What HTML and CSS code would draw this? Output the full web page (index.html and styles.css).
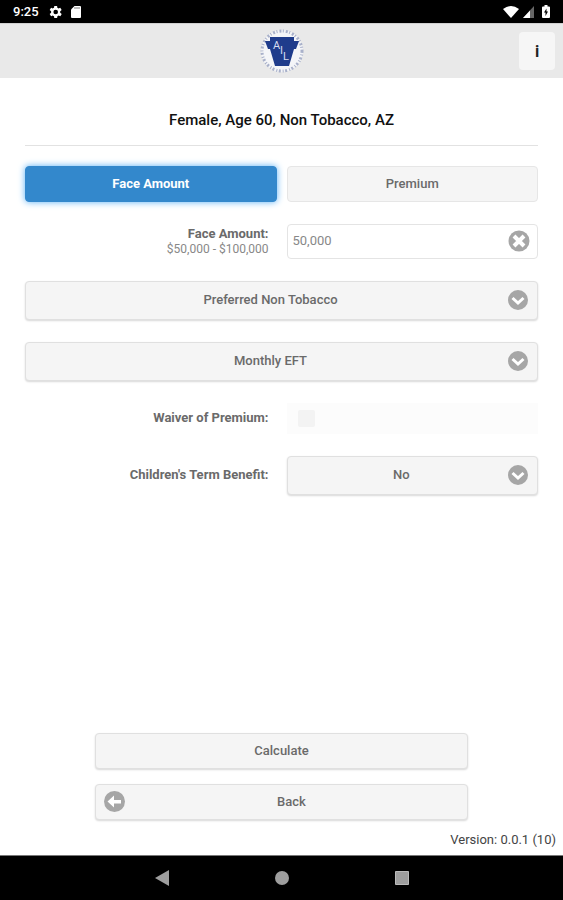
FILE: index.html
```html
<!DOCTYPE html>
<html lang="en">
<head>
  <meta charset="UTF-8" />
  <meta name="viewport" content="width=device-width, initial-scale=1" />
  <title>Quote</title>
  <link rel="stylesheet" href="styles.css">
</head>
<body>

<div class="status-bar">
  <span class="clock">9:25</span>
  <svg width="14" height="14" viewBox="2 2 20 20" fill="#fff"><path d="M19.4 13a7.500 7.500 0 0 0 0-2l2.100-1.700-2-3.400-2.500 1a7.300 7.300 0 0 0-1.700-1L15 3.300h-4l-.4 2.600a7.300 7.300 0 0 0-1.700 1l-2.500-1-2 3.400L6.500 11a7.500 7.500 0 0 0 0 2l-2.100 1.700 2 3.400 2.500-1a7.300 7.300 0 0 0 1.700 1l.4 2.600h4l.4-2.600a7.300 7.300 0 0 0 1.700-1l2.500 1 2-3.400zM13 15.300a3.300 3.300 0 1 1 0-6.600 3.300 3.300 0 0 1 0 6.600z"/></svg>
  <svg width="10" height="12" viewBox="0 0 10 12"><path fill="#fff" d="M3.500 0H9a1 1 0 0 1 1 1v10a1 1 0 0 1-1 1H1a1 1 0 0 1-1-1V3.500z"/><path stroke="#777" d="M4 1v2M6 1v2M8 1v2"/></svg>
  <div class="status-right">
    <svg width="16" height="12" viewBox="0 0 16 12"><path fill="#fff" d="M0 3Q8-3 16 3L8 12z"/></svg>
    <svg width="11" height="12" viewBox="0 0 11 12"><path fill="#666" d="M11 0v12H0z"/><path fill="#fff" d="M7 4.400V12H0z"/></svg>
    <svg width="8" height="13" viewBox="0 0 8 13"><path fill="#fff" d="M2.500 0h3v1.500H7a1 1 0 0 1 1 1V12a1 1 0 0 1-1 1H1a1 1 0 0 1-1-1V2.500a1 1 0 0 1 1-1h1.500z"/><path fill="#000" d="M4.500 3.500v3H6L3.500 11V7.500H2z"/></svg>
  </div>
</div>

<header class="header">
  <svg class="logo" width="46" height="46" viewBox="0 0 46 46">
    <circle cx="23" cy="23" r="21" fill="#f4f5f8"/>
    <circle cx="23" cy="23" r="20" fill="none" stroke="#a9b1ca" stroke-width="3" stroke-dasharray="2 1.500 1 2"/>
    <path fill="#1f3c8c" d="M11 9h24v4h5l-3 8h-2l-5 17H16l-5-17H9l-3-8h5z"/>
    <g class="logo-text">
      <text x="14" y="21">A</text>
      <text x="21" y="26">I</text>
      <text x="24" y="32">L</text>
    </g>
  </svg>
  <button type="button" class="info-btn">i</button>
</header>

<main class="content">
  <h1 class="summary">Female, Age 60, Non Tobacco, AZ</h1>

  <form class="quote-form">
    <div class="row">
      <button type="button" class="btn active" aria-pressed="true">Face Amount</button>
      <button type="button" class="btn" aria-pressed="false">Premium</button>
    </div>

    <div class="row">
      <label class="label" for="faceAmount">Face Amount:<small>$50,000 - $100,000</small></label>
      <div class="field">
        <input type="text" id="faceAmount" class="text-input" value="50,000" />
        <button type="button" class="clear-btn" aria-label="Clear">
          <svg width="22" height="22" viewBox="0 0 22 22"><circle cx="11" cy="11" r="10.500" fill="#a6a6a6"/><path stroke="#fff" stroke-width="4" d="M6 6l10 10M16 6L6 16"/></svg>
        </button>
      </div>
    </div>

    <div class="field">
      <select class="select" aria-label="Rate class">
        <option>Preferred Non Tobacco</option>
      </select>
      <svg class="arrow" width="20" height="20" viewBox="0 0 20 20"><circle cx="10" cy="10" r="10" fill="#a6a6a6"/><path fill="none" stroke="#fff" stroke-width="3" d="M4.500 8l5.500 5 5.500-5"/></svg>
    </div>

    <div class="field">
      <select class="select" aria-label="Payment mode">
        <option>Monthly EFT</option>
      </select>
      <svg class="arrow" width="20" height="20" viewBox="0 0 20 20"><circle cx="10" cy="10" r="10" fill="#a6a6a6"/><path fill="none" stroke="#fff" stroke-width="3" d="M4.500 8l5.500 5 5.500-5"/></svg>
    </div>

    <div class="row">
      <label class="label" for="waiver">Waiver of Premium:</label>
      <div class="check-box">
        <input type="checkbox" id="waiver" class="check" disabled />
      </div>
    </div>

    <div class="row">
      <label class="label" for="childTerm">Children's Term Benefit:</label>
      <div class="field">
        <select class="select" id="childTerm">
          <option>No</option>
        </select>
        <svg class="arrow" width="20" height="20" viewBox="0 0 20 20"><circle cx="10" cy="10" r="10" fill="#a6a6a6"/><path fill="none" stroke="#fff" stroke-width="3" d="M4.500 8l5.500 5 5.500-5"/></svg>
      </div>
    </div>
  </form>

  <div class="actions">
    <button type="button" class="btn raised">Calculate</button>
    <button type="button" class="btn raised back">
      <svg class="back-icon" width="21" height="21" viewBox="0 0 21 21"><circle cx="10.500" cy="10.500" r="10.500" fill="#a6a6a6"/><path fill="#fff" d="M3.500 10.500L10 4.500V9h7v3.500h-7v4z"/></svg>
      Back
    </button>
  </div>
</main>

<footer class="version">Version: 0.0.1 (10)</footer>

<nav class="nav-bar">
  <svg width="16" height="16" viewBox="0 0 16 16"><path fill="#9e9e9e" d="M15 0v16L1 8z"/></svg>
  <svg width="16" height="16" viewBox="0 0 16 16"><circle cx="8" cy="8" r="7" fill="#9e9e9e"/></svg>
  <svg width="16" height="16" viewBox="0 0 16 16"><path fill="#9e9e9e" stroke="#bbb" d="M1.500 1.500h13v13h-13z"/></svg>
</nav>

</body>
</html>
```
FILE: styles.css
```css
* {
  box-sizing: border-box;
}
body {
  display: flex;
  flex-direction: column;
  min-height: 100vh;
  margin: 0;
  background: #fff;
  color: #6a6a6a;
  font-family: Roboto, Arial, sans-serif;
  font-size: 13px;
}
button, input, select {
  margin: 0;
  font-family: inherit;
  font-size: 13px;
  color: inherit;
}
svg {
  display: block;
}
.status-bar {
  display: flex;
  align-items: center;
  gap: 9px;
  height: 23px;
  padding: 0 13px;
  background: #000;
  color: #fff;
}
.clock {
  font-weight: 500;
}
.status-right {
  display: flex;
  align-items: center;
  gap: 4px;
  margin-left: auto;
}
.status-right svg:last-child {
  margin: 0 0 0 4px;
}
.header {
  display: grid;
  grid-template-columns: 1fr auto 1fr;
  align-items: center;
  height: 55px;
  padding: 0 8px;
  background: #e9e9e9;
  border-top: 1px solid #d0d0d0;
}
.logo {
  grid-column: 2;
}
.logo-text {
  fill: #d5dcf0;
  font-size: 11px;
}
.info-btn {
  justify-self: end;
  width: 36px;
  height: 38px;
  padding: 0;
  border: none;
  border-radius: 4px;
  background: #f6f6f6;
  color: #222;
  font-size: 16px;
  font-weight: 700;
}
.content {
  display: flex;
  flex-direction: column;
  flex: 1;
  padding: 32px 25px 0;
}
.summary {
  margin: 0 0 20px;
  padding-bottom: 15px;
  border-bottom: 1px solid #e2e2e2;
  color: #111;
  font-size: 15px;
  line-height: 20px;
  font-weight: 500;
  text-align: center;
}
.quote-form {
  display: flex;
  flex-direction: column;
  gap: 22px;
}
.row {
  display: grid;
  grid-template-columns: 1fr 1fr;
  gap: 10px;
  align-items: center;
}
.label {
  padding: 0 8px 2px 0;
  font-weight: 700;
  line-height: 16px;
  text-align: right;
}
.label small {
  display: block;
  color: #888;
  font-size: 12px;
  font-weight: 400;
  line-height: 14px;
}
.btn {
  height: 36px;
  padding: 0 10px 2px;
  border: 1px solid #e6e6e6;
  border-radius: 4px;
  background: #f5f5f5;
  font-weight: 500;
}
.btn.active {
  border-color: #3388cc;
  background: #3388cc;
  color: #fff;
  font-weight: 700;
  box-shadow: 0 0 7px #5ab0f5;
}
.btn.raised, .select {
  border-color: #e0e0e0;
  box-shadow: 0 1px 2px #d8d8d8;
}
.field {
  position: relative;
}
.text-input {
  display: block;
  width: 100%;
  height: 35px;
  padding: 0 34px 2px 5px;
  border: 1px solid #e4e4e4;
  border-radius: 4px;
  background: #fff;
  color: #888;
}
.clear-btn {
  position: absolute;
  top: 6px;
  right: 8px;
  padding: 0;
  border: none;
  background: none;
}
.select {
  display: block;
  width: 100%;
  height: 39px;
  padding: 0 32px 3px 10px;
  border: 1px solid #e0e0e0;
  border-radius: 4px;
  background: #f5f5f5;
  font-weight: 500;
  text-align: center;
  text-align-last: center;
  appearance: none;
}
.arrow {
  position: absolute;
  top: 9px;
  right: 10px;
  pointer-events: none;
}
.check-box {
  display: flex;
  align-items: center;
  height: 31px;
  padding: 0 11px;
  background: #fcfcfc;
}
.check {
  width: 17px;
  height: 17px;
  margin: 0;
  border-radius: 2px;
  background: #f3f3f3;
  appearance: none;
}
.actions {
  display: flex;
  flex-direction: column;
  gap: 15px;
  margin-top: auto;
  padding: 24px 70px 0;
}
.back {
  position: relative;
  padding-left: 30px;
}
.back-icon {
  position: absolute;
  top: 6px;
  left: 8px;
}
.version {
  padding: 10px 7px 6px;
  color: #444;
  line-height: 19px;
  text-align: right;
}
.nav-bar {
  display: flex;
  align-items: center;
  justify-content: center;
  gap: 104px;
  height: 45px;
  border-top: 1px solid #777;
  background: #000;
}
```
